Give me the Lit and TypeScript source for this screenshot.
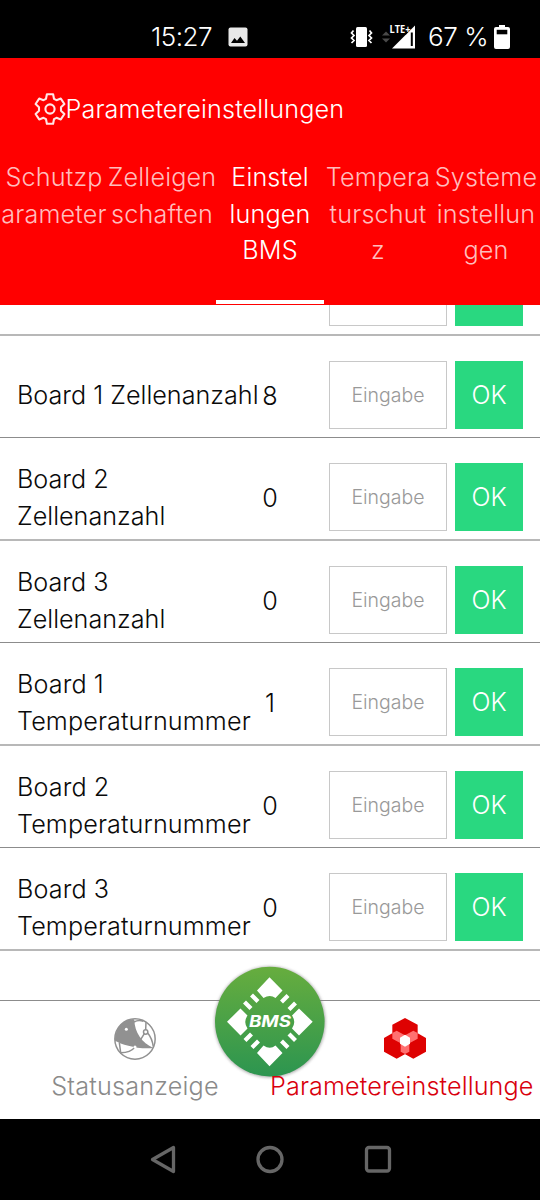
import { LitElement, html, css, svg } from "lit";
import { customElement, state } from "lit/decorators.js";
import { classMap } from "lit/directives/class-map.js";

interface Param {
  label: string[];
  value: string;
  kind: string;
}

const PARAMS: Param[] = [
  { label: ["Board 1 Zellenanzahl"], value: "8", kind: "single" },
  { label: ["Board 2", "Zellenanzahl"], value: "0", kind: "cells" },
  { label: ["Board 3", "Zellenanzahl"], value: "0", kind: "cells" },
  { label: ["Board 1", "Temperaturnummer"], value: "1", kind: "temp" },
  { label: ["Board 2", "Temperaturnummer"], value: "0", kind: "temp" },
  { label: ["Board 3", "Temperaturnummer"], value: "0", kind: "temp" },
];

const TABS: string[][] = [
  ["Schutzp", "arameter"],
  ["Zelleigen", "schaften"],
  ["Einstel", "lungen", "BMS"],
  ["Tempera", "turschut", "z"],
  ["Systeme", "instellun", "gen"],
];

@customElement("status-bar")
export class StatusBar extends LitElement {
  static styles = css`
    :host {
      display: block;
      height: 58px;
      background: #000;
      color: #fff;
    }
    .bar {
      display: flex;
      align-items: center;
      height: 58px;
      padding: 16px 30px 0 151px;
      box-sizing: border-box;
      font-size: 26px;
      line-height: 42px;
    }
    .time { width: 77px; letter-spacing: -0.5px; }
    .spacer { flex: 1; }
    svg { display: block; flex: none; }
    .vib { margin-right: 9px; }
    .signal { margin-right: 12px; }
    .pct { width: 66px; white-space: nowrap; letter-spacing: -0.4px; }
    .lte { font: 700 10.5px/1 "Open Sans", sans-serif; }
  `;
  render() {
    return html`
      <div class="bar">
        <span class="time">15:27</span>
        <svg width="20" height="20" viewBox="0 0 20 20">
          <rect x="0.5" y="0.5" width="19" height="19" rx="2" fill="#e8e8e8" />
          <path d="M3 16 L6.5 11 L9 13.8 L12.3 9.6 L17 16Z" fill="#000" />
        </svg>
        <span class="spacer"></span>
        <svg class="vib" width="23" height="22" viewBox="0 0 23 22">
          <rect x="6" y="1" width="11" height="20" rx="1.5" fill="#fff" />
          <path d="M3.5 4.5 L1.5 7 L4 9.5 L1.5 12 L4 14.5 L1.5 17 M19.5 4.5 L21.5 7 L19 9.5 L21.5 12 L19 14.5 L21.5 17"
            fill="none" stroke="#fff" stroke-width="1.7" />
        </svg>
        <svg class="signal" width="34" height="34" viewBox="0 -4 34 34">
          <path d="M0 11.5 L4 7.5 L8 11.5Z M0 14.5 L4 18.5 L8 14.5Z" fill="#4a4a4a" />
          <path d="M33 1.5 V24.5 H10Z" fill="#fff" />
          <rect x="28.8" y="8.5" width="2" height="13.5" fill="#000" />
          <path d="M7 0 H28 V6 L24 10.5 H7Z" fill="#000" />
          <text class="lte" x="7.5" y="9" fill="#fff" textLength="21" lengthAdjust="spacingAndGlyphs">LTE+</text>
        </svg>
        <span class="pct">67 %</span>
        <svg width="16" height="24" viewBox="0 0 16 24">
          <path d="M5 0 H11 V2 H14 Q16 2 16 4 V22 Q16 24 14 24 H2 Q0 24 0 22 V4 Q0 2 2 2 H5Z" fill="#fff" />
          <rect x="2.7" y="4.8" width="10.6" height="4.5" fill="#000" />
        </svg>
      </div>
    `;
  }
}

@customElement("param-row")
export class ParamRow extends LitElement {
  static properties = {
    param: { attribute: false },
    thick: { type: Boolean },
    cut: { type: Boolean },
  };
  declare param: Param | undefined;
  declare thick: boolean;
  declare cut: boolean;

  static styles = css`
    :host { display: block; }
    .row {
      display: grid;
      grid-template-columns: 241px 24px 118px 68px;
      grid-template-rows: 68px;
      height: 68px;
      padding: 25px 16px 8px 17px;
      border-bottom: 1px solid #8c8c8c;
      align-items: center;
    }
    .row.thick { border-bottom: 2px solid #b8b8b8; }
    .row.cut { padding-top: 0; height: 21px; grid-template-rows: 21px; align-items: end; }
    .label {
      grid-column: 1;
      padding-top: 1px;
      font-size: 25.2px;
      line-height: 36.5px;
      white-space: nowrap;
      color: #0a0a0a;
    }
    .label.temp { letter-spacing: 0.1px; }
    .label span { display: block; }
    .value { grid-column: 2; padding-top: 1px; text-align: center; font-size: 25.2px; color: #0a0a0a; }
    .field, .ok {
      box-sizing: border-box;
      height: 68px;
      display: flex;
      align-items: center;
      justify-content: center;
      border-radius: 0;
      font-family: inherit;
      font-weight: inherit;
    }
    .field {
      grid-column: 3;
      width: 118px;
      margin-left: 47px;
      border: 1px solid #c8c8c8;
      color: #999;
      font-size: 19.5px;
    }
    .ok {
      grid-column: 4;
      margin-left: 55.4px;
      width: 67.6px;
      border: 0;
      padding: 0;
      background: #29d880;
      color: #fff;
      font-size: 25px;
    }
    .cut .field, .cut .ok { height: 21px; border-top: 0; }
  `;
  render() {
    const p = this.param;
    return html`
      <div class=${classMap({ row: true, thick: this.thick, cut: this.cut })}>
        <div class="label ${p ? p.kind : ""}">${p ? p.label.map((l) => html`<span>${l}</span>`) : ""}</div>
        <div class="value">${p ? p.value : ""}</div>
        <div class="field">${p ? "Eingabe" : ""}</div>
        <button class="ok">${p ? "OK" : ""}</button>
      </div>
    `;
  }
}

@customElement("app-root")
export class AppRoot extends LitElement {
  @state() private active = 2;

  static styles = css`
    :host {
      display: flex;
      flex-direction: column;
      height: 1200px;
      overflow: hidden;
      background: #fff;
      font-family: Inter, "Liberation Sans", sans-serif;
      font-weight: 300;
    }
    header {
      box-sizing: border-box;
      height: 247px;
      background: #f00;
      color: #fff;
    }
    .title {
      display: flex;
      align-items: center;
      height: 101px;
      box-sizing: border-box;
      padding: 1px 0 0 33.5px;
      font-size: 25.2px;
      letter-spacing: 0.13px;
    }
    .title svg { display: block; }
    .tabs { display: grid; grid-template-columns: repeat(5, 108px); height: 145px; }
    .tab {
      box-sizing: border-box;
      display: flex;
      flex-direction: column;
      align-items: center;
      font-size: 25.2px;
      line-height: 36.5px;
      letter-spacing: 0.15px;
      color: #ffbdbd;
      border-bottom: 4px solid transparent;
    }
    .tab.on { color: #fff; border-color: #fff; }
    main { flex: none; height: 695px; overflow: hidden; }
    nav {
      position: relative;
      box-sizing: border-box;
      height: 119px;
      border-top: 1px solid #8c8c8c;
      display: grid;
      grid-template-columns: 1fr 1fr;
      justify-items: center;
    }
    .item {
      box-sizing: border-box;
      display: flex;
      flex-direction: column;
      align-items: center;
      width: 270px;
      padding-top: 17px;
      font-size: 25.2px;
      line-height: 36px;
      letter-spacing: 0.2px;
      color: #8a8a8a;
      gap: 8px;
      z-index: 1;
    }
    .item.on { color: #d9000d; letter-spacing: 0.12px; }
    .item.on span { align-self: flex-start; }
    .logo { position: absolute; left: 210px; top: -39px; }
    .bms { font: italic 700 15.3px Inter, sans-serif; }
    .keys { flex: 1; background: #000; display: block; }
  `;

  private gear() {
    return svg`<svg width="32" height="32" viewBox="0 0 32 32" fill="none" stroke="#ffe6e6" stroke-width="2.1" stroke-linejoin="round">
      <path d="M12.9 1.3 H19.1 L20 5.8 L22.5 7.2 L26.8 5.6 L30.4 11 L27 14.2 V17.8 L30.4 21 L26.8 26.4 L22.5 24.8 L20 26.2 L19.1 30.7 H12.9 L12 26.2 L9.5 24.8 L5.2 26.4 L1.6 21 L5 17.8 V14.2 L1.6 11 L5.2 5.6 L9.5 7.2 L12 5.8Z"/>
      <circle cx="16" cy="16" r="4.6"/></svg>`;
  }

  private globe() {
    return svg`<svg width="42" height="42" viewBox="0 0 126 126" fill="none" stroke="#919191" stroke-width="4.5">
      <circle cx="63" cy="63" r="60.5"/>
      <path d="M58 3 C20 6 2 36 3 68 C24 80 70 94 118 90 C84 74 62 44 61 6Z" fill="#919191" stroke="none"/>
      <path d="M60 12 Q74 4 88 10 M96 12 L95 36 M91 47 L78 68 M101 45 Q114 60 118 86 M16 74 L20 104 Q50 104 62 88"/>
      <circle cx="95" cy="42" r="6.5" fill="#fff"/>
      <circle cx="37" cy="34" r="4.5" fill="#fff" stroke="none"/>
      <circle cx="63" cy="87" r="4.5" fill="#fff" stroke="none"/></svg>`;
  }

  private hexes() {
    return svg`<svg width="42" height="42" viewBox="0 0 126 126">
      <path d="M63 0 L101 20 V63 L63 84 L25 63 V20Z M38 38 L76 60 V101 L38 122 L0 101 V60Z M88 38 L126 60 V101 L88 122 L50 101 V60Z" fill="#de0202"/>
      <path d="M25 45 L38 38 L63 52 L88 38 L101 45 V62 L76 76 V101 L63 108 L50 101 V76 L25 62Z" fill="#ff7070"/>
      <path d="M63 50 L78 59 V77 L63 86 L48 77 V59Z" fill="#fff"/></svg>`;
  }

  private logo() {
    return svg`<svg class="logo" width="120" height="120" viewBox="0 0 120 120">
      <defs>
        <linearGradient id="g" x1="0" y1="0" x2="0" y2="1">
          <stop offset="0" stop-color="#67ad3e"/><stop offset="1" stop-color="#2c9550"/>
        </linearGradient>
        <filter id="s" x="-10%" y="-10%" width="120%" height="120%"><feGaussianBlur stdDeviation="1.8"/></filter>
      </defs>
      <circle cx="60" cy="60" r="55.5" fill="#777" opacity="0.6" filter="url(#s)"/>
      <circle cx="59.8" cy="59.6" r="54.8" fill="url(#g)"/>
      <g fill="#fff">
        <path d="M59.5 15.3 L72.5 28.5 L65.5 36 Q60 32 53.5 36 L47 28.5Z"/>
        <path d="M59.5 104.3 L72.5 91 L65.5 83.5 Q60 88 53.5 83.5 L47 91Z"/>
        <path d="M17 59.8 L30.5 46.5 L37.5 53.5 Q33 60 37.5 66.5 L30.5 73.5Z"/>
        <path d="M102.7 59.8 L89 46.5 L82 53.5 Q86.5 60 82 66.5 L89 73.5Z"/>
      </g>
      <path d="M41.5 33 L48 39.5 M34.5 40 L41 46.5 M78 33.5 L71.5 40 M85.5 41 L79 47.5 M42 85.5 L48.5 79 M35 78.5 L41.5 72 M78 85.5 L71.5 79 M85.5 78.5 L79 72" stroke="#fff" stroke-width="4.2"/>
      <text class="bms" x="60" y="64.8" text-anchor="middle" fill="#fff" textLength="42" lengthAdjust="spacingAndGlyphs">BMS</text>
    </svg>`;
  }

  render() {
    return html`
      <status-bar></status-bar>
      <header>
        <div class="title">${this.gear()}<span>Parametereinstellungen</span></div>
        <div class="tabs">
          ${TABS.map(
            (t, i) => html`<div class=${classMap({ tab: true, on: i === this.active })} @click=${() => (this.active = i)}>
              ${t.map((l) => html`<span>${l}</span>`)}
            </div>`,
          )}
        </div>
      </header>
      <main>
        <param-row cut thick></param-row>
        ${PARAMS.map((p, i) => html`<param-row .param=${p} ?thick=${i % 2 === 1}></param-row>`)}
      </main>
      <nav>
        <div class="item">${this.globe()}<span>Statusanzeige</span></div>
        <div class="item on">${this.hexes()}<span>Parametereinstellunge</span></div>
        ${this.logo()}
      </nav>
      <svg class="keys" width="540" height="81" viewBox="0 0 540 81" fill="none" stroke="#666" stroke-width="3.3" stroke-linejoin="round">
        <path d="M152.5 40.5 L173.5 28.5 V52.5Z"/>
        <circle cx="270" cy="40.5" r="12"/>
        <rect x="366.5" y="28.5" width="23" height="23.5" rx="2.5"/>
      </svg>
    `;
  }
}
